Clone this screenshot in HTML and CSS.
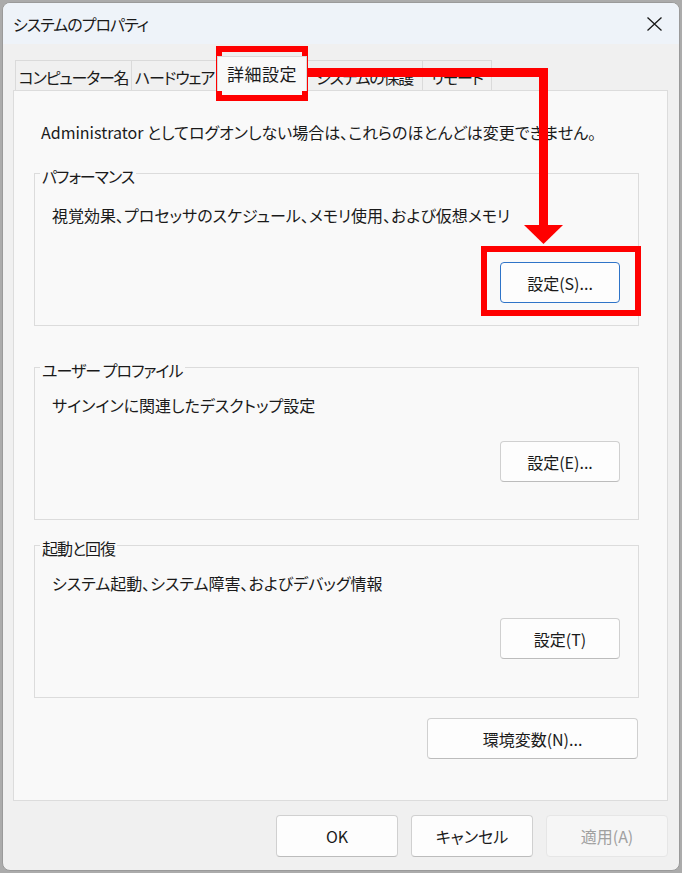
FILE: index.html
```html
<!DOCTYPE html>
<html lang="ja">
<head>
<meta charset="utf-8">
<title>システムのプロパティ</title>
<link rel="stylesheet" href="styles.css">
</head>
<body>
<div class="window">
  <div class="titlebar">
    <span class="title">システムのプロパティ</span>
    <svg class="close" viewBox="0 0 15 14" width="15" height="14"><path d="M0.5 0.5 L14.5 13.5 M14.5 0.5 L0.5 13.5" stroke="#1a1a1a" stroke-width="1.3" fill="none"/></svg>
  </div>
  <div class="content">
    <div class="tabs">
      <div class="tab tab-name">コンピューター名</div>
      <div class="tab tab-hw">ハードウェア</div>
      <div class="tab tab-adv active">詳細設定</div>
      <div class="tab tab-prot">システムの保護</div>
      <div class="tab tab-remote">リモート</div>
    </div>
    <div class="panel">
      <p class="note">Administrator としてログオンしない場合は、これらのほとんどは変更できません。</p>
      <fieldset class="group perf">
        <legend>パフォーマンス</legend>
        <p class="desc">視覚効果、プロセッサのスケジュール、メモリ使用、および仮想メモリ</p>
        <div class="row"><button class="btn focus">設定(S)...</button></div>
      </fieldset>
      <fieldset class="group profile">
        <legend>ユーザー プロファイル</legend>
        <p class="desc">サインインに関連したデスクトップ設定</p>
        <div class="row"><button class="btn">設定(E)...</button></div>
      </fieldset>
      <fieldset class="group boot">
        <legend>起動と回復</legend>
        <p class="desc">システム起動、システム障害、およびデバッグ情報</p>
        <div class="row"><button class="btn">設定(T)</button></div>
      </fieldset>
      <div class="row env-row"><button class="btn env">環境変数(N)...</button></div>
    </div>
    <div class="footer">
      <button class="btn wide">OK</button>
      <button class="btn wide">キャンセル</button>
      <button class="btn wide disabled">適用(A)</button>
    </div>
  </div>
</div>
<svg class="annot" width="682" height="873" viewBox="0 0 682 873">
  <rect x="219" y="49" width="86" height="49" fill="none" stroke="#ff0000" stroke-width="6"/>
  <rect x="305" y="68" width="243" height="9" fill="#ff0000"/>
  <rect x="539" y="68" width="9" height="158" fill="#ff0000"/>
  <polygon points="524,225 563,225 543.5,244" fill="#ff0000"/>
  <rect x="484" y="249" width="154" height="64" fill="none" stroke="#ff0000" stroke-width="6"/>
</svg>
</body>
</html>
```

FILE: styles.css
```css
html, body {
  margin: 0;
  padding: 0;
}
body {
  width: 682px;
  height: 873px;
  overflow: hidden;
  position: relative;
  background: #ababab;
  font-family: "Noto Sans CJK JP", "Noto Sans", sans-serif;
  font-feature-settings: "palt";
  font-size: 16px;
  color: #1a1a1a;
}
.window {
  margin: 2px 0 0 2px;
  width: 678px;
  height: 869px;
  box-sizing: border-box;
  border: 1px solid #9a9a9a;
  border-radius: 8px;
  background: #f0f0f0;
  overflow: hidden;
  display: flex;
  flex-direction: column;
}
.titlebar {
  height: 41px;
  flex: none;
  background: #eef3f9;
  display: flex;
  align-items: center;
  justify-content: space-between;
  padding: 0 17px 0 10px;
}
.title {
  font-size: 16px;
  line-height: 20px;
  letter-spacing: -1px;
}
.close {
  display: block;
}
.content {
  flex: 1;
  padding: 12px 11px 0 10px;
}
.tabs {
  display: flex;
  align-items: flex-end;
  height: 34px;
  padding-left: 2px;
}
.tab {
  height: 30px;
  box-sizing: border-box;
  border: 1px solid #dadada;
  border-bottom: none;
  display: flex;
  align-items: center;
  justify-content: center;
  padding-top: 2px;
  background: #f0f0f0;
  margin-right: -1px;
  white-space: nowrap;
  line-height: 20px;
  letter-spacing: -1.2px;
}
.tab-name { width: 117px; }
.tab-hw { width: 87px; }
.tab-adv { width: 90px; }
.tab-prot { width: 117px; }
.tab-remote { width: 70px; }
.tab.active {
  height: 35px;
  margin-bottom: -1px;
  background: #f9f9f9;
  position: relative;
  z-index: 1;
  padding-top: 0;
  font-size: 17px;
  letter-spacing: 0.5px;
}
.panel {
  height: 711px;
  box-sizing: border-box;
  border: 1px solid #dcdcdc;
  background: #f9f9f9;
  padding: 31px 28px 0 20px;
}
.note {
  margin: 0 0 0 7px;
  line-height: 20px;
  white-space: nowrap;
}
.group {
  margin: 0;
  border: 1px solid #dcdcdc;
  padding: 0 18px 0 5px;
  min-width: 0;
}
.group legend {
  padding: 6px 2px 0;
  line-height: 20px;
  letter-spacing: -1px;
}
.desc {
  margin: 0 0 0 12px;
  line-height: 20px;
  white-space: nowrap;
}
.row {
  display: flex;
  justify-content: flex-end;
}
.perf { margin-top: 18px; padding-bottom: 22px; }
.perf .desc { margin-top: 19px; }
.perf .row { margin-top: 37px; }
.profile { margin-top: 28px; padding-bottom: 37px; }
.profile .desc { margin-top: 15px; }
.profile .row { margin-top: 26px; }
.boot { margin-top: 12px; padding-bottom: 38px; }
.boot .desc { margin-top: 15px; }
.boot .row { margin-top: 25px; }
.btn {
  width: 120px;
  height: 41px;
  box-sizing: border-box;
  border: 1px solid #d0d0d0;
  border-bottom-color: #bcbcbc;
  border-radius: 4px;
  background: #fdfdfd;
  font-family: inherit;
  font-feature-settings: "palt";
  font-size: 16px;
  color: #1a1a1a;
  padding: 0;
  line-height: 20px;
}
.btn.focus {
  border: 1px solid #2f74c8;
}
.env-row {
  margin-top: 20px;
  padding-right: 1px;
}
.btn.env {
  width: 211px;
}
.footer {
  display: flex;
  justify-content: flex-end;
  gap: 13px;
  margin-top: 14px;
}
.btn.wide {
  width: 122px;
  height: 42px;
}
.btn.disabled {
  color: #a0a0a0;
  background: #f6f6f6;
  border-color: #e6e6e6;
}
.annot {
  position: absolute;
  left: 0;
  top: 0;
  pointer-events: none;
}
```
